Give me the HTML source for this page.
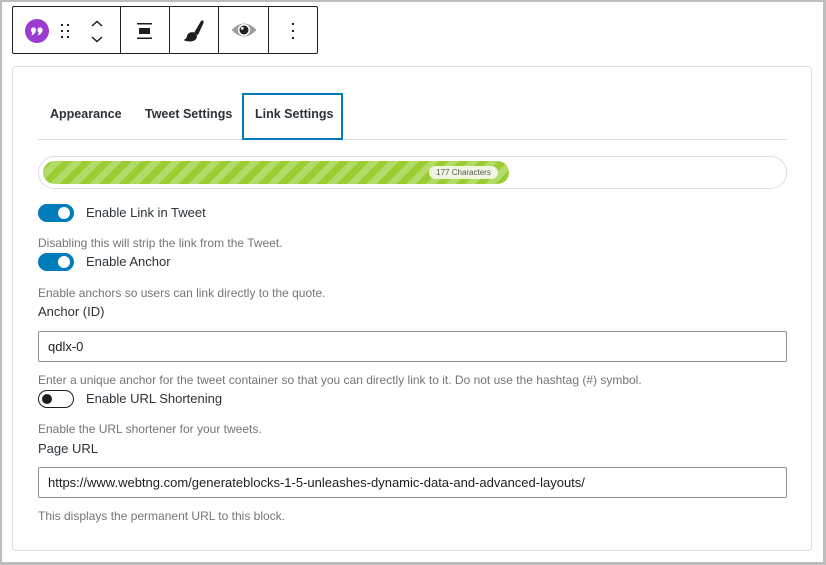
<!DOCTYPE html>
<html><head><style>
*{box-sizing:border-box;margin:0;padding:0}
body{width:826px;height:565px;background:#fff;font-family:"Segoe UI","Liberation Sans",sans-serif;color:#1e1e1e;position:relative;overflow:hidden}
.frame{position:absolute;left:0;top:0;width:826px;height:565px;border:2px solid #bdbdbd;border-right-width:3px;border-bottom-width:3px}
.tb{position:absolute;left:12px;top:6px;width:306px;height:48px;border:1px solid #1e1e1e;border-radius:2px;background:#fff}
.dv{position:absolute;top:0;width:1px;height:46px;background:#1e1e1e}
.panel{position:absolute;left:12px;top:66px;width:800px;height:485px;border:1px solid #ddd;border-radius:4px}
.a{position:absolute;white-space:nowrap}
.tab{font-size:12.5px;font-weight:bold;color:#2c3338}
.help{font-size:12px;color:#757575}
.lbl{font-size:13px;color:#2c3338}
.tg{position:absolute;width:36px;height:18px;border-radius:9px}
.tg.on{background:#007cba}
.tg.on::after{content:"";position:absolute;right:4px;top:3px;width:12px;height:12px;border-radius:50%;background:#fff}
.tg.off{border:1px solid #1e1e1e;background:#fff}
.tg.off::after{content:"";position:absolute;left:3px;top:3px;width:10px;height:10px;border-radius:50%;background:#1e1e1e}
.inp{position:absolute;left:38px;width:749px;height:31px;border:1px solid #8c8f94;border-radius:2px;font-size:13px;padding:7px 9px;color:#1e1e1e}
</style></head><body>
<div class="frame"></div>
<div class="tb">
 <svg class="a" style="left:11px;top:11px" width="26" height="26" viewBox="0 0 26 26"><circle cx="13" cy="13" r="12" fill="#9b3bd0"/><circle cx="9.5" cy="12" r="2.6" fill="#fff"/><path d="M7.5 12.5 Q9 16 7 17.5 Q11 16.5 12 12.5Z" fill="#fff"/><circle cx="16" cy="12" r="2.6" fill="#fff"/><path d="M14 12.5 Q15.5 16 13.5 17.5 Q17.5 16.5 18.5 12.5Z" fill="#fff"/></svg>
 <svg class="a" style="left:47px;top:16px" width="12" height="16"><g fill="#1e1e1e"><rect x="1" y="1" width="2" height="2"/><rect x="7" y="1" width="2" height="2"/><rect x="1" y="7" width="2" height="2"/><rect x="7" y="7" width="2" height="2"/><rect x="1" y="13" width="2" height="2"/><rect x="7" y="13" width="2" height="2"/></g></svg>
 <svg class="a" style="left:77px;top:13px" width="14" height="24"><path d="M2 6 L7 1.5 L12 6 M2 17 L7 21.5 L12 17" fill="none" stroke="#1e1e1e" stroke-width="1.5"/></svg>
 <div class="dv" style="left:107px"></div>
 <svg class="a" style="left:124px;top:15px" width="16" height="18"><rect x="0" y="1" width="15" height="1.5" fill="#1e1e1e"/><rect x="2" y="6" width="11" height="6" fill="#1e1e1e"/><rect x="0" y="15.5" width="15" height="1.5" fill="#1e1e1e"/></svg>
 <div class="dv" style="left:156px"></div>
 <svg class="a" style="left:169px;top:12px" width="24" height="26" viewBox="0 0 24 26"><path d="M12 14 L19 2 Q22 0 21.5 4 L16 16Z" fill="#1e1e1e"/><path d="M8 13.5 Q13 12 15 16.5 Q15 22 8.5 22.5 Q4 22.5 1.5 21 Q4.5 20 5 17 Q5.5 14.5 8 13.5Z" fill="#1e1e1e"/></svg>
 <div class="dv" style="left:205px"></div>
 <svg class="a" style="left:218px;top:13px" width="26" height="20" viewBox="0 0 26 20"><path d="M0.5 10 Q13 -3 25.5 10 Q13 23 0.5 10Z" fill="#9e9e9e"/><circle cx="13" cy="10" r="6" fill="#fff"/><circle cx="13" cy="10" r="4.5" fill="#1e1e1e"/><circle cx="11.3" cy="8.3" r="1.4" fill="#fff"/></svg>
 <div class="dv" style="left:255px"></div>
 <svg class="a" style="left:278px;top:15px" width="4" height="18"><g fill="#1e1e1e"><rect x="1" y="1" width="2" height="2"/><rect x="1" y="8" width="2" height="2"/><rect x="1" y="15" width="2" height="2"/></g></svg>
</div>
<div class="panel"></div>
<div class="a tab" style="left:50px;top:107px">Appearance</div>
<div class="a tab" style="left:145px;top:107px">Tweet Settings</div>
<div class="a" style="left:38px;top:139px;width:749px;height:1px;background:#ddd"></div>
<div class="a" style="left:242px;top:93px;width:101px;height:47px;border:2px solid #007cba;background:#fff"></div>
<div class="a tab" style="left:255px;top:107px">Link Settings</div>
<div class="a" style="left:38px;top:156px;width:749px;height:33px;border:1px solid #ddd;border-radius:17px"></div>
<div class="a" style="left:43px;top:161px;width:466px;height:23px;border-radius:12px;background:repeating-linear-gradient(135deg,#9acd32 0 7px,#b3db6a 7px 14px)"></div>
<div class="a" style="left:429px;top:166px;width:69px;height:13px;border-radius:7px;background:#eef6df;font-size:8px;color:#555;text-align:center;line-height:13px">177 Characters</div>
<div class="tg on" style="left:38px;top:204px"></div>
<div class="a lbl" style="left:86px;top:205px">Enable Link in Tweet</div>
<div class="a help" style="left:38px;top:236px">Disabling this will strip the link from the Tweet.</div>
<div class="tg on" style="left:38px;top:253px"></div>
<div class="a lbl" style="left:86px;top:254px">Enable Anchor</div>
<div class="a help" style="left:38px;top:286px">Enable anchors so users can link directly to the quote.</div>
<div class="a lbl" style="left:38px;top:304px">Anchor (ID)</div>
<div class="inp" style="top:331px">qdlx-0</div>
<div class="a help" style="left:38px;top:373px">Enter a unique anchor for the tweet container so that you can directly link to it. Do not use the hashtag (#) symbol.</div>
<div class="tg off" style="left:38px;top:390px"></div>
<div class="a lbl" style="left:86px;top:391px">Enable URL Shortening</div>
<div class="a help" style="left:38px;top:422px">Enable the URL shortener for your tweets.</div>
<div class="a lbl" style="left:38px;top:441px">Page URL</div>
<div class="inp" style="top:467px">https://www.webtng.com/generateblocks-1-5-unleashes-dynamic-data-and-advanced-layouts/</div>
<div class="a help" style="left:38px;top:509px">This displays the permanent URL to this block.</div>
</body></html>
